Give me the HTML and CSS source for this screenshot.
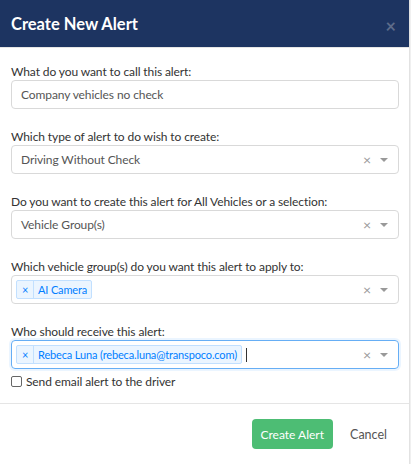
FILE: index.html
```html
<!DOCTYPE html>
<html lang="en">
<head>
    <meta charset="UTF-8">
    <meta name="viewport" content="width=device-width, initial-scale=1.0">
    <title>Create New Alert</title>
    <link rel="stylesheet" href="styles.css">
</head>
<body>
    <div class="modal">
        <div class="modal-header">
            <h1>Create New Alert</h1>
            <span class="close">&times;</span>
        </div>

        <div class="modal-body">
            <div class="form-group">
                <label>What do you want to call this alert:</label>
                <div class="control">
                    <span class="value">Company vehicles no check</span>
                </div>
            </div>

            <div class="form-group">
                <label>Which type of alert to do wish to create:</label>
                <div class="control select">
                    <span class="value">Driving Without Check</span>
                    <span class="clear">&times;</span>
                    <span class="arrow"></span>
                </div>
            </div>

            <div class="form-group">
                <label>Do you want to create this alert for All Vehicles or a selection:</label>
                <div class="control select">
                    <span class="value">Vehicle Group(s)</span>
                    <span class="clear">&times;</span>
                    <span class="arrow"></span>
                </div>
            </div>

            <div class="form-group">
                <label>Which vehicle group(s) do you want this alert to apply to:</label>
                <div class="control select multi">
                    <div class="tags">
                        <span class="tag"><span class="tag-x">&times;</span><span class="tag-label">AI Camera</span></span>
                    </div>
                    <span class="clear">&times;</span>
                    <span class="arrow"></span>
                </div>
            </div>

            <div class="form-group last">
                <label>Who should receive this alert:</label>
                <div class="control select multi focused">
                    <div class="tags">
                        <span class="tag"><span class="tag-x">&times;</span><span class="tag-label">Rebeca Luna (rebeca.luna@transpoco.com)</span></span>
                        <span class="caret"></span>
                    </div>
                    <span class="clear">&times;</span>
                    <span class="arrow"></span>
                </div>
            </div>

            <label class="check">
                <span class="box"></span>
                Send email alert to the driver
            </label>
        </div>

        <div class="modal-footer">
            <button class="btn-create">Create Alert</button>
            <button class="btn-cancel">Cancel</button>
        </div>
    </div>
</body>
</html>
```

FILE: styles.css
```css
body {
    font-family: Lato, Arial, sans-serif;
    background-color: #f0f0f0;
    margin: 0;
    padding: 0;
    color: #333;
}

.modal {
    width: 409px;
    height: 464px;
    background-color: #fff;
    border-right: 1px solid #e2e2e2;
}

.modal-header {
    background-color: #1d3461;
    height: 48px;
    display: flex;
    align-items: center;
    justify-content: space-between;
    padding: 0 11px;
    border-bottom: 1px solid #e5e5e5;
    box-sizing: border-box;
}

.modal-header h1 {
    margin: 0;
    color: #fff;
    font-size: 16.5px;
    font-weight: bold;
}

.close {
    color: #5d6c8a;
    font-size: 18px;
    font-weight: bold;
    margin: 4px 2px 0 0;
}

.modal-body {
    padding: 15px 10px 0 11px;
}

.form-group {
    margin-bottom: 19px;
}

.form-group.last {
    margin-bottom: 4px;
}

label {
    display: block;
    font-size: 12px;
    letter-spacing: -0.1px;
    line-height: 17px;
    color: #333;
}

.control {
    height: 29px;
    border: 1px solid #d9d9d9;
    border-radius: 4px;
    box-sizing: border-box;
    display: flex;
    align-items: center;
    padding: 0 10px 0 9px;
    font-size: 12px;
    letter-spacing: -0.1px;
    color: #555;
}

.control .value {
    flex: 1;
}

.control.multi {
    padding-left: 4px;
}

.control.focused {
    border-color: #66aef5;
    box-shadow: 0 0 0 2px rgba(0, 126, 255, 0.08);
}

.clear {
    color: #999;
    font-size: 14px;
    margin-right: 9px;
}

.arrow {
    width: 0;
    height: 0;
    border-left: 4px solid transparent;
    border-right: 4px solid transparent;
    border-top: 4px solid #999;
    margin-top: 1px;
}

.tags {
    flex: 1;
    display: flex;
    align-items: center;
}

.tag {
    display: flex;
    height: 19px;
    background-color: #ebf5ff;
    border: 1px solid #c2e0ff;
    border-radius: 2px;
    box-sizing: border-box;
    color: #007eff;
    font-size: 11px;
    letter-spacing: -0.15px;
    line-height: 17px;
}

.tag-x {
    width: 16px;
    text-align: center;
    border-right: 1px solid #c2e0ff;
}

.tag-label {
    padding: 0 4px;
}

.caret {
    width: 1px;
    height: 14px;
    background-color: #333;
    margin-left: 4px;
}

.check {
    display: flex;
    align-items: center;
    font-size: 12px;
    color: #333;
}

.box {
    width: 9px;
    height: 9px;
    border: 1px solid #666;
    border-radius: 2px;
    margin-right: 4px;
}

.modal-footer {
    margin-top: 13px;
    border-top: 1px solid #e5e5e5;
    padding: 15px 18px 0 0;
    display: flex;
    justify-content: flex-end;
    align-items: center;
}

.btn-create {
    background-color: #4dbd74;
    color: #fff;
    border: none;
    border-radius: 4px;
    height: 30px;
    padding: 0 9px;
    font-family: inherit;
    font-size: 12px;
    cursor: pointer;
}

.btn-cancel {
    background: none;
    border: none;
    color: #555;
    font-family: inherit;
    font-size: 12.5px;
    margin-left: 13px;
    padding: 0 4px;
    cursor: pointer;
}
```
